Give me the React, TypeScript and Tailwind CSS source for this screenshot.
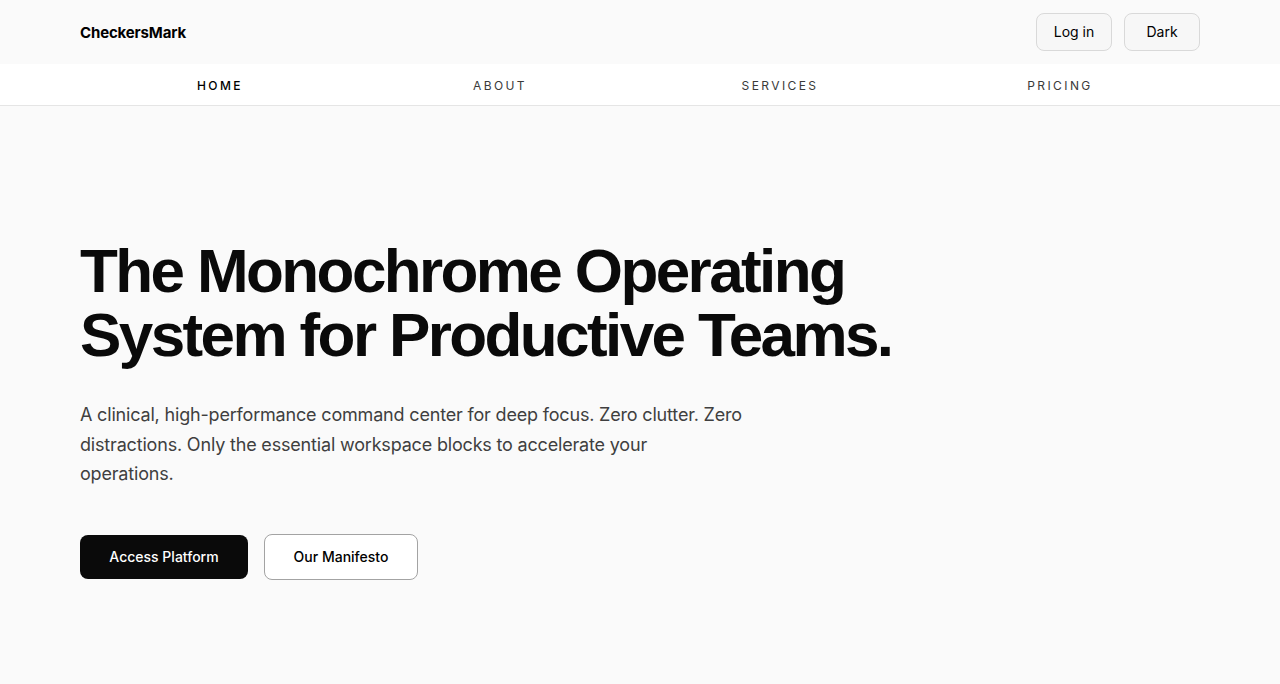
import React from 'react';

const navItems = ['Home', 'About', 'Services', 'Pricing'];

function Header() {
  return (
    <header className="bg-[#fafafa]">
      <div className="mx-auto flex h-16 max-w-[1280px] items-center justify-between px-20">
        <span className="pt-[3px] text-[15px] font-bold tracking-[-0.01em] text-black">CheckersMark</span>
        <div className="flex items-center gap-3">
          <button className="h-[38px] w-[76px] rounded-lg border border-[#d9d9d9] bg-[#f7f7f7] text-sm text-black">
            Log in
          </button>
          <button className="h-[38px] w-[76px] rounded-lg border border-[#d9d9d9] bg-[#f7f7f7] text-sm text-black">
            Dark
          </button>
        </div>
      </div>
    </header>
  );
}

function NavBar() {
  return (
    <nav className="border-b border-[#e5e5e5] bg-white">
      <div className="mx-auto grid h-[41px] max-w-[1280px] grid-cols-4 items-center px-20">
        {navItems.map((item, index) => (
          <a
            key={item}
            href="#"
            className={
              index === 0
                ? 'pt-[3px] text-center text-xs font-medium uppercase tracking-[0.2em] text-black'
                : 'pt-[3px] text-center text-xs uppercase tracking-[0.2em] text-[#3a3a3a]'
            }
          >
            {item}
          </a>
        ))}
      </div>
    </nav>
  );
}

function Hero() {
  return (
    <section className="mx-auto max-w-[1280px] px-20 pt-[133px]">
      <h1 className="font-['Liberation_Sans',sans-serif] text-[62px] font-bold leading-[64px] tracking-[-0.042em] text-[#0a0a0a]">
        The Monochrome Operating
        <br />
        System for Productive Teams.
      </h1>
      <p className="mt-[33px] max-w-[664px] text-lg leading-[29.5px] tracking-[-0.01em] text-[#3f3f3f]">
        A clinical, high-performance command center for deep focus. Zero clutter. Zero distractions. Only the
        essential workspace blocks to accelerate your operations.
      </p>
      <div className="mt-[45px] flex items-center gap-4">
        <button className="h-11 w-[168px] rounded-lg bg-[#0a0a0a] text-sm font-medium text-white">
          Access Platform
        </button>
        <button className="h-[46px] w-[154px] rounded-lg border border-[#a3a3a3] bg-white text-sm font-medium text-black">
          Our Manifesto
        </button>
      </div>
    </section>
  );
}

export default function App() {
  return (
    <div className="min-h-screen bg-[#fafafa] font-['Inter',sans-serif]">
      <Header />
      <NavBar />
      <Hero />
    </div>
  );
}
